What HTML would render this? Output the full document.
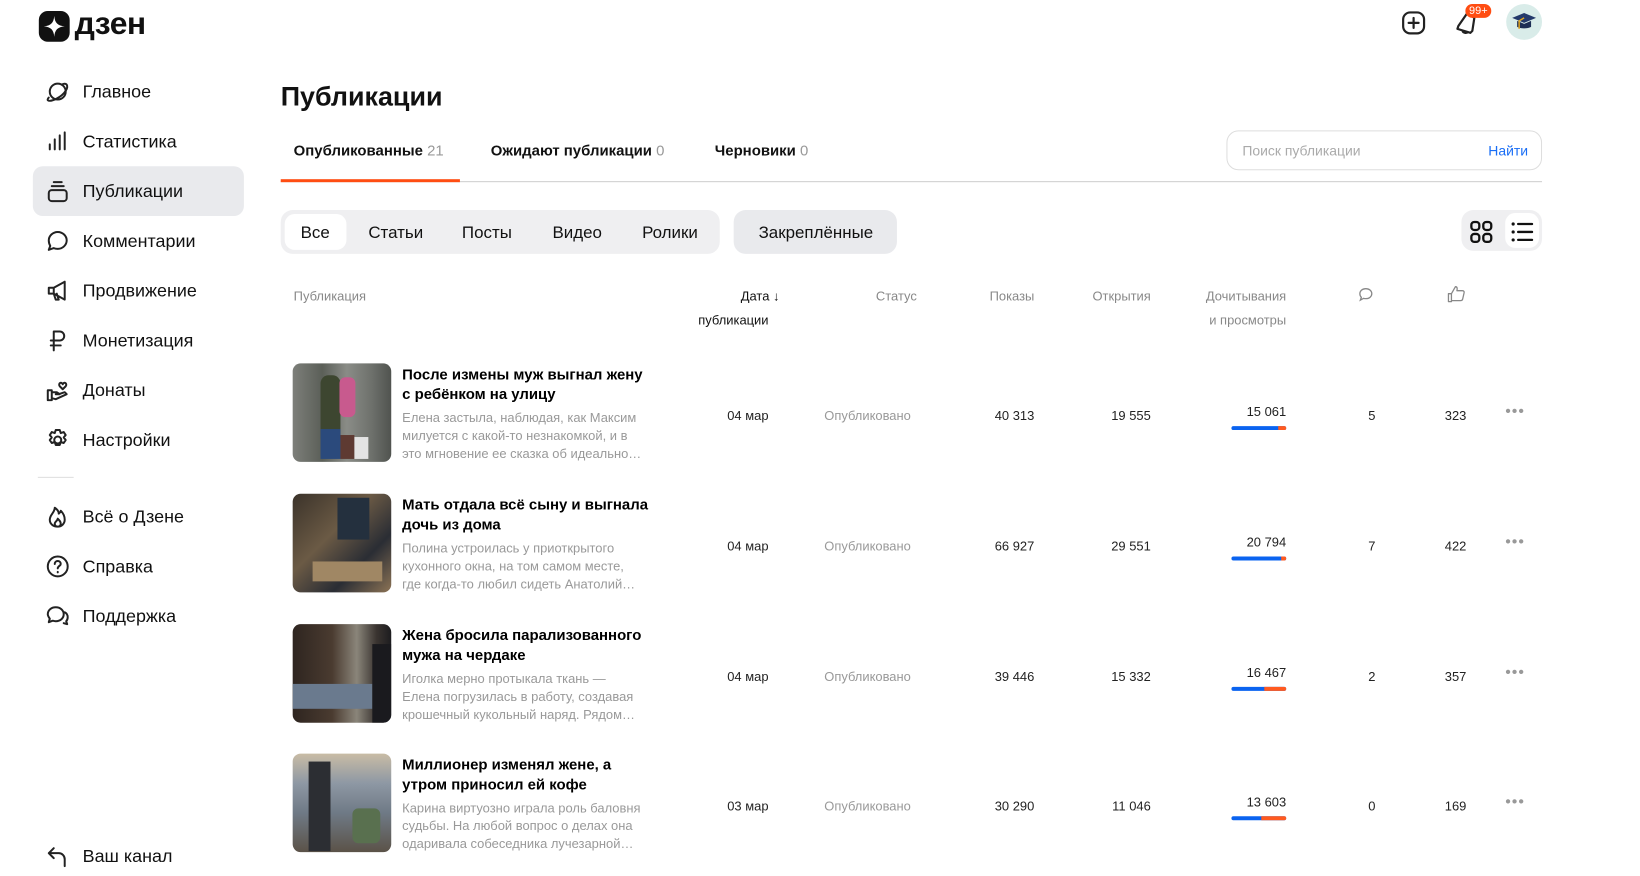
<!DOCTYPE html>
<html><head><meta charset="utf-8"><style>
*{box-sizing:border-box;margin:0;padding:0}
body{width:1640px;height:864px;overflow:hidden;background:#fff;font-family:"Liberation Sans","DejaVu Sans",sans-serif;color:#000;position:relative}
#w{position:absolute;left:0;top:0;width:1640px;height:880px;transform:scale(0.9955);transform-origin:0 0}
.a{position:absolute}
.nav{position:absolute;left:44px;font-size:18px;color:#111;display:flex;align-items:center}
.nav svg{width:28px;height:28px;margin-right:11px;fill:none;stroke:#222;stroke-width:2;stroke-linecap:round;stroke-linejoin:round}
.hd{position:absolute;font-size:13px;color:#888;text-align:right}
.row{position:absolute;left:0;width:1640px;height:110px}
.th{position:absolute;left:294px;top:0;width:99px;height:99px;border-radius:8px;overflow:hidden}
.tt{position:absolute;left:404px;top:2px;width:248px;font-size:15px;font-weight:bold;line-height:20px;color:#000}
.ds{position:absolute;left:404px;top:46px;width:255px;font-size:13px;line-height:18px;color:#999;white-space:nowrap}
.c{position:absolute;top:45px;font-size:13px;color:#222;text-align:right}
.bar{position:absolute;top:63px;left:1237px;width:55px;height:4px;border-radius:2px;background:#0a63f0}
.bar i{position:absolute;right:0;top:0;height:4px;width:8px;background:#ff5a1f;border-radius:0 2px 2px 0}
.dots{position:absolute;top:40px;left:1512px;color:#999;font-size:16px;letter-spacing:1px}
</style></head><body><div id="w">
<div class="a" style="left:39px;top:11px;width:31px;height:31px;background:#111;border-radius:9px"></div>
<svg class="a" style="left:39px;top:11px" width="31" height="31" viewBox="0 0 31 31"><path d="M15.5 5 C16 12 19 15 26 15.5 C19 16 16 19 15.5 26 C15 19 12 16 5 15.5 C12 15 15 12 15.5 5Z" fill="#fff"/></svg>
<div class="a" style="left:75px;top:5px;font-size:32px;font-weight:bold;letter-spacing:-0.5px;color:#111">дзен</div>

<div class="a" style="left:33px;top:167px;width:212px;height:50px;background:#e9eaed;border-radius:10px"></div>
<div class="nav" style="top:78px"><svg viewBox="0 0 28 28"><circle cx="14" cy="14" r="8"/><path d="M5 20c-3 3 0 5 8 1s12-11 10-14c-1-1-3-1-5 0"/></svg>Главное</div>
<div class="nav" style="top:128px"><svg viewBox="0 0 28 28"><path d="M6 22v-5M11 22V12M16 22V8M21 22V5"/></svg>Статистика</div>
<div class="nav" style="top:178px"><svg viewBox="0 0 28 28"><rect x="5" y="13" width="18" height="11" rx="3"/><path d="M8 9h12M10 5h8"/></svg>Публикации</div>
<div class="nav" style="top:228px"><svg viewBox="0 0 28 28"><path d="M14 5c5 0 9 4 9 8.5S19 22 14 22c-1.5 0-3-.3-4-.8L5 23l1.5-4C5.5 17.5 5 15.5 5 13.5 5 9 9 5 14 5z"/></svg>Комментарии</div>
<div class="nav" style="top:278px"><svg viewBox="0 0 28 28"><path d="M5 11h5l11-6v18l-11-6H5zM10 17l2 6h3l-2-6M10 11v6"/></svg>Продвижение</div>
<div class="nav" style="top:328px"><svg viewBox="0 0 28 28"><path d="M10 24V5h6a4.5 4.5 0 010 9h-9M7 19h10"/></svg>Монетизация</div>
<div class="nav" style="top:378px"><svg viewBox="0 0 28 28"><path d="M4 14h4v10H4zM8 16h5l3 2h-4M8 22l4 1 11-5-2-2-6 2M16 10c-2-3 2-5 3-2 1-3 5-1 3 2l-3 3z"/></svg>Донаты</div>
<div class="nav" style="top:428px"><svg viewBox="0 0 28 28"><circle cx="14" cy="14" r="3.5"/><path d="M12 4h4l1 3 3-1 2 3-2 2.5 2 2.5-2 3-3-1-1 3h-4l-1-3-3 1-2-3 2-2.5L6 9l2-3 3 1z"/></svg>Настройки</div>
<div class="a" style="left:38px;top:479px;width:36px;height:1px;background:#ddd"></div>
<div class="nav" style="top:505px"><svg viewBox="0 0 28 28"><path d="M14 24c-5 0-8-3-8-7 0-5 5-7 5-12 3 2 4 4 4 6 1-1 2-2 2-3 3 3 4 6 4 9 0 4-3 7-7 7zM14 24c-2 0-3-1.5-3-3 0-2 3-3 3-5 2 2 3 3 3 5 0 1.5-1 3-3 3z"/></svg>Всё о Дзене</div>
<div class="nav" style="top:555px"><svg viewBox="0 0 28 28"><circle cx="14" cy="14" r="10"/><path d="M11 11.5a3 3 0 116 0c0 2-3 2-3 4.5M14 19.5v.5"/></svg>Справка</div>
<div class="nav" style="top:605px"><svg viewBox="0 0 28 28"><path d="M12 5c4.5 0 8 3 8 7s-3.5 7-8 7c-1 0-2-.2-3-.5L5 20l1-3.5C5 15 4 13.5 4 12c0-4 3.5-7 8-7zM21 10c2 1 3 3 3 5 0 1.5-.5 3-1.5 4l1 3-3.5-1"/></svg>Поддержка</div>
<div class="nav" style="top:846px"><svg viewBox="0 0 28 28"><path d="M10 6L5 11l5 5M5 11h10a6 6 0 016 6v7"/></svg>Ваш канал</div>

<svg class="a" style="left:1407px;top:10px" width="26" height="26" viewBox="0 0 26 26" fill="none" stroke="#222" stroke-width="2.2" stroke-linecap="round"><rect x="2.5" y="2.5" width="21" height="21" rx="7"/><path d="M13 8v10M8 13h10"/></svg>
<svg class="a" style="left:1460px;top:9px" width="30" height="28" viewBox="0 0 30 28" fill="none" stroke="#222" stroke-width="2.2" stroke-linejoin="round"><path d="M14 4L5 17l-1 3 13 4 2-2 2-13z"/><path d="M9 21c0 3 4 4 6 2"/></svg>
<div class="a" style="left:1472px;top:4px;width:26px;height:14px;background:#ff4d12;border-radius:7px;color:#fff;font-size:11px;line-height:14px;text-align:center">99+</div>
<div class="a" style="left:1513px;top:4px;width:36px;height:36px;border-radius:50%;background:#d9ece9"></div>
<svg class="a" style="left:1518px;top:10px" width="26" height="24" viewBox="0 0 26 24"><path d="M1 8l12-5 12 5-12 5z" fill="#243a6b"/><path d="M6 11v6c3 2 11 2 14 0v-6l-7 3z" fill="#1d2e55"/><path d="M13 8l-5 3v8" stroke="#e2a520" stroke-width="1.5" fill="none"/></svg>

<div class="a" style="left:282px;top:82px;font-size:27px;font-weight:bold;color:#111">Публикации</div>
<div class="a" style="left:295px;top:143px;font-size:15px;font-weight:bold;color:#111">Опубликованные <span style="font-weight:normal;color:#999">21</span></div>
<div class="a" style="left:493px;top:143px;font-size:15px;font-weight:bold;color:#111">Ожидают публикации <span style="font-weight:normal;color:#999">0</span></div>
<div class="a" style="left:718px;top:143px;font-size:15px;font-weight:bold;color:#111">Черновики <span style="font-weight:normal;color:#999">0</span></div>
<div class="a" style="left:282px;top:182px;width:1267px;height:1px;background:#ccc"></div>
<div class="a" style="left:282px;top:180px;width:180px;height:3px;background:#ff4d12"></div>
<div class="a" style="left:1232px;top:131px;width:317px;height:40px;border:1px solid #ddd;border-radius:12px"></div>
<div class="a" style="left:1248px;top:143px;font-size:14px;color:#aaa">Поиск публикации</div>
<div class="a" style="left:1495px;top:143px;font-size:14px;color:#1a6ef5">Найти</div>

<div class="a" style="left:282px;top:211px;width:441px;height:44px;background:#efeff1;border-radius:12px"></div>
<div class="a" style="left:286px;top:215px;width:62px;height:36px;background:#fff;border-radius:10px"></div>
<div class="a" style="top:224px;left:302px;font-size:17px;color:#111">Все</div>
<div class="a" style="top:224px;left:370px;font-size:17px;color:#111">Статьи</div>
<div class="a" style="top:224px;left:464px;font-size:17px;color:#111">Посты</div>
<div class="a" style="top:224px;left:555px;font-size:17px;color:#111">Видео</div>
<div class="a" style="top:224px;left:645px;font-size:17px;color:#111">Ролики</div>
<div class="a" style="left:737px;top:211px;width:164px;height:44px;background:#e9eaed;border-radius:12px"></div>
<div class="a" style="top:224px;left:762px;font-size:17px;color:#111">Закреплённые</div>
<div class="a" style="left:1468px;top:211px;width:81px;height:41px;background:#efeff1;border-radius:12px"></div>
<div class="a" style="left:1512px;top:214px;width:34px;height:35px;background:#fff;border-radius:10px"></div>
<svg class="a" style="left:1476px;top:221px" width="24" height="24" viewBox="0 0 24 24" fill="none" stroke="#111" stroke-width="2.3"><rect x="2" y="2" width="8" height="8" rx="3"/><rect x="14" y="2" width="8" height="8" rx="3"/><rect x="2" y="14" width="8" height="8" rx="3"/><rect x="14" y="14" width="8" height="8" rx="3"/></svg>
<svg class="a" style="left:1517px;top:221px" width="24" height="24" viewBox="0 0 24 24" stroke="#111" stroke-width="2.3" stroke-linecap="round"><circle cx="3" cy="4" r="1.6" fill="#111" stroke="none"/><circle cx="3" cy="12" r="1.6" fill="#111" stroke="none"/><circle cx="3" cy="20" r="1.6" fill="#111" stroke="none"/><path d="M8 4h14M8 12h14M8 20h14"/></svg>

<div class="hd" style="left:295px;top:290px;text-align:left">Публикация</div>
<div class="hd" style="left:700px;top:290px;width:83px;color:#111">Дата ↓</div>
<div class="hd" style="left:660px;top:314px;width:112px;color:#111">публикации</div>
<div class="hd" style="left:821px;top:290px;width:100px">Статус</div>
<div class="hd" style="left:939px;top:290px;width:100px">Показы</div>
<div class="hd" style="left:1056px;top:290px;width:100px">Открытия</div>
<div class="hd" style="left:1152px;top:290px;width:140px">Дочитывания</div>
<div class="hd" style="left:1152px;top:314px;width:140px">и просмотры</div>
<svg class="a" style="left:1364px;top:288px" width="16" height="16" viewBox="0 0 16 16" fill="none" stroke="#888" stroke-width="1.3"><path d="M8 2c3.5 0 6 2.2 6 5s-2.5 5-6 5c-.8 0-1.5-.1-2.2-.3L2.5 13.5l1-2.8C2.5 9.7 2 8.4 2 7c0-2.8 2.5-5 6-5z"/></svg>
<svg class="a" style="left:1454px;top:287px" width="18" height="17" viewBox="0 0 18 17" fill="none" stroke="#888" stroke-width="1.3" stroke-linejoin="round"><path d="M1 8h3v8H1zM4 8l4-7c2 0 2 2 1.5 4H15c1.5 0 2 1 1.7 2.2l-1.5 6.5c-.3 1-1 1.3-2 1.3H4"/></svg>

<div class="row" style="top:365px">
<div class="th" style="background:linear-gradient(90deg,#7d7f7a 0%,#5b5f58 30%,#8a8c87 55%,#6e716c 80%,#50534f 100%)"><div class="a" style="left:28px;top:12px;width:20px;height:70px;background:#3d4630;border-radius:8px"></div><div class="a" style="left:47px;top:14px;width:16px;height:40px;background:#c85a8e;border-radius:6px"></div><div class="a" style="left:28px;top:66px;width:20px;height:30px;background:#2b4a7c"></div><div class="a" style="left:48px;top:72px;width:14px;height:24px;background:#5e3a32"></div><div class="a" style="left:62px;top:74px;width:14px;height:22px;background:#e3e3e3"></div></div>
<div class="tt">После измены муж выгнал жену с ребёнком на улицу</div>
<div class="ds">Елена застыла, наблюдая, как Максим<br>милуется с какой-то незнакомкой, и в<br>это мгновение ее сказка об идеально…</div>
<div class="c" style="left:700px;width:72px">04 мар</div><div class="c" style="left:828px;color:#999">Опубликовано</div>
<div class="c" style="left:939px;width:100px">40 313</div><div class="c" style="left:1056px;width:100px">19 555</div>
<div class="c" style="left:1192px;width:100px;top:41px">15 061</div><div class="bar"><i></i></div>
<div class="c" style="left:1360px;width:36px;text-align:center">5</div><div class="c" style="left:1413px;width:60px">323</div><div class="dots">•••</div>
</div>
<div class="row" style="top:496px">
<div class="th" style="background:linear-gradient(135deg,#3b332a 0%,#6b5a45 40%,#2a2d34 70%,#8c7355 100%)"><div class="a" style="left:45px;top:4px;width:32px;height:42px;background:#24303e"></div><div class="a" style="left:20px;top:68px;width:70px;height:20px;background:#a08764"></div></div>
<div class="tt">Мать отдала всё сыну и выгнала дочь из дома</div>
<div class="ds">Полина устроилась у приоткрытого<br>кухонного окна, на том самом месте,<br>где когда-то любил сидеть Анатолий…</div>
<div class="c" style="left:700px;width:72px">04 мар</div><div class="c" style="left:828px;color:#999">Опубликовано</div>
<div class="c" style="left:939px;width:100px">66 927</div><div class="c" style="left:1056px;width:100px">29 551</div>
<div class="c" style="left:1192px;width:100px;top:41px">20 794</div><div class="bar"><i style="width:5px"></i></div>
<div class="c" style="left:1360px;width:36px;text-align:center">7</div><div class="c" style="left:1413px;width:60px">422</div><div class="dots">•••</div>
</div>
<div class="row" style="top:627px">
<div class="th" style="background:linear-gradient(90deg,#2e2520 0%,#4a3b30 40%,#8a857a 65%,#3a3430 85%,#1c1c1f 100%)"><div class="a" style="left:0;top:60px;width:80px;height:25px;background:#6a7a8e"></div><div class="a" style="left:80px;top:20px;width:19px;height:79px;background:#1a1a1e"></div></div>
<div class="tt">Жена бросила парализованного мужа на чердаке</div>
<div class="ds">Иголка мерно протыкала ткань —<br>Елена погрузилась в работу, создавая<br>крошечный кукольный наряд. Рядом…</div>
<div class="c" style="left:700px;width:72px">04 мар</div><div class="c" style="left:828px;color:#999">Опубликовано</div>
<div class="c" style="left:939px;width:100px">39 446</div><div class="c" style="left:1056px;width:100px">15 332</div>
<div class="c" style="left:1192px;width:100px;top:41px">16 467</div><div class="bar"><i style="width:22px"></i></div>
<div class="c" style="left:1360px;width:36px;text-align:center">2</div><div class="c" style="left:1413px;width:60px">357</div><div class="dots">•••</div>
</div>
<div class="row" style="top:757px">
<div class="th" style="background:linear-gradient(180deg,#c9bca5 0%,#8e98a4 30%,#6f7a86 60%,#5b5248 100%)"><div class="a" style="left:16px;top:8px;width:22px;height:90px;background:#2c2e33"></div><div class="a" style="left:60px;top:55px;width:28px;height:35px;background:#59704f;border-radius:6px"></div></div>
<div class="tt" style="width:215px">Миллионер изменял жене, а утром приносил ей кофе</div>
<div class="ds">Карина виртуозно играла роль баловня<br>судьбы. На любой вопрос о делах она<br>одаривала собеседника лучезарной…</div>
<div class="c" style="left:700px;width:72px">03 мар</div><div class="c" style="left:828px;color:#999">Опубликовано</div>
<div class="c" style="left:939px;width:100px">30 290</div><div class="c" style="left:1056px;width:100px">11 046</div>
<div class="c" style="left:1192px;width:100px;top:41px">13 603</div><div class="bar"><i style="width:25px"></i></div>
<div class="c" style="left:1360px;width:36px;text-align:center">0</div><div class="c" style="left:1413px;width:60px">169</div><div class="dots">•••</div>
</div>
</div></body></html>
